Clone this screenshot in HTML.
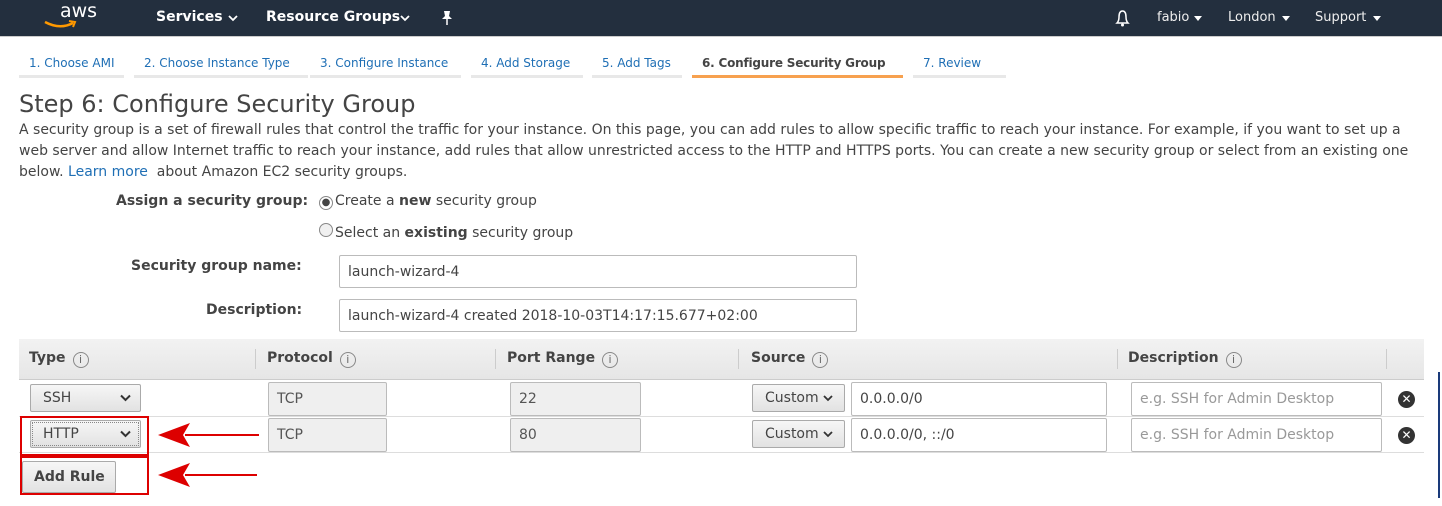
<!DOCTYPE html>
<html><head><meta charset="utf-8"><style>
*{box-sizing:border-box;margin:0;padding:0}
body{width:1442px;height:506px;overflow:hidden;background:#fff;font-family:"DejaVu Sans","Liberation Sans",sans-serif;color:#444;position:relative}
.a{position:absolute;white-space:nowrap}
.nav{position:absolute;left:0;top:0;width:1442px;height:37px;background:#232f3e;border-bottom:1px solid #ccc}
.nav .a{color:#fff;font-size:14px;font-weight:bold;top:9px}
.nav .r{font-weight:normal;font-size:13px;color:#eee;top:10px}
.tab{position:absolute;top:52px;height:26px;border-bottom:3px solid #e8e8e8;font-size:12px;color:#1f6fb5;padding:4px 0 0 10px;white-space:nowrap}
.inp{position:absolute;border:1px solid #bbb;border-radius:2px;background:#fff;font-size:14px;padding:0 8px;display:flex;align-items:center}
.ro{background:#efefef;color:#555}
.btn{position:absolute;border:1px solid #aaa;border-radius:2px;background:linear-gradient(#f6f6f6,#e2e2e2);font-size:14px;color:#444;display:flex;align-items:center;padding-left:12px}
.th{position:absolute;top:350px;font-weight:bold;font-size:14px;color:#444}
.i{display:inline-block;width:16px;height:16px;border:1px solid #888;border-radius:50%;font-size:11px;font-weight:normal;text-align:center;line-height:14px;color:#666;margin-left:7px;vertical-align:-1px}
.sep{position:absolute;top:349px;width:1px;height:20px;background:#ccc}
.x{position:absolute;width:17px;height:17px;border-radius:50%;background:#333;color:#fff;font-size:12px;font-weight:bold;text-align:center;line-height:17px}
.chev{position:absolute;right:9px;top:9px}
</style></head><body>
<div class="nav">
<div class="a" style="left:60px;top:0px;font-size:19px;font-weight:normal">aws</div>
<svg class="a" style="left:43px;top:20px" width="34" height="10"><path d="M2 2 Q17 10 30 3" stroke="#f90" stroke-width="2.5" fill="none"/><path d="M26 1 L32 2 L30 7" stroke="#f90" stroke-width="2" fill="none"/></svg>
<div class="a" style="left:156px">Services</div>
<svg class="a" style="left:228px;top:15px" width="10" height="7"><path d="M1 1 L5 5 L9 1" stroke="#fff" stroke-width="1.8" fill="none"/></svg>
<div class="a" style="left:266px">Resource Groups</div>
<svg class="a" style="left:400px;top:15px" width="10" height="7"><path d="M1 1 L5 5 L9 1" stroke="#fff" stroke-width="1.8" fill="none"/></svg>
<svg class="a" style="left:440px;top:10px" width="14" height="16"><path d="M4 1 L10 1 L9 6 L12 9 L2 9 L5 6 Z" fill="#fff"/><path d="M7 9 L7 15" stroke="#fff" stroke-width="1.5"/></svg>
<svg class="a" style="left:1114px;top:9px" width="17" height="19"><path d="M3 14 Q5 12 5 8 Q5 2 8.5 2 Q12 2 12 8 Q12 12 14 14 Z" stroke="#fff" stroke-width="1.5" fill="none"/><circle cx="8.5" cy="16" r="1.5" fill="#fff"/></svg>
<div class="a r" style="left:1157px">fabio</div>
<svg class="a" style="left:1194px;top:16px" width="8" height="5"><path d="M0 0 H8 L4 5Z" fill="#fff"/></svg>
<div class="a r" style="left:1228px">London</div>
<svg class="a" style="left:1282px;top:16px" width="8" height="5"><path d="M0 0 H8 L4 5Z" fill="#fff"/></svg>
<div class="a r" style="left:1315px">Support</div>
<svg class="a" style="left:1373px;top:16px" width="8" height="5"><path d="M0 0 H8 L4 5Z" fill="#fff"/></svg>
</div>
<div class="tab" style="left:19px;width:105px">1. Choose AMI</div>
<div class="tab" style="left:134px;width:174px">2. Choose Instance Type</div>
<div class="tab" style="left:310px;width:151px">3. Configure Instance</div>
<div class="tab" style="left:471px;width:112px">4. Add Storage</div>
<div class="tab" style="left:592px;width:90px">5. Add Tags</div>
<div class="tab" style="left:692px;width:211px;border-bottom-color:#f7a14f;color:#444;font-weight:bold;letter-spacing:-0.2px">6. Configure Security Group</div>
<div class="tab" style="left:913px;width:93px">7. Review</div>
<div class="a" style="left:19px;top:90px;font-size:24px;color:#444">Step 6: Configure Security Group</div>
<div class="a" style="left:19px;top:120px;font-size:14px;line-height:21px;white-space:normal;width:1415px">A security group is a set of firewall rules that control the traffic for your instance. On this page, you can add rules to allow specific traffic to reach your instance. For example, if you want to set up a web server and allow Internet traffic to reach your instance, add rules that allow unrestricted access to the HTTP and HTTPS ports. You can create a new security group or select from an existing one below. <span style="color:#1f6fb5">Learn more</span>&nbsp; about Amazon EC2 security groups.</div>
<div class="a" style="left:116px;top:193px;font-size:14px;font-weight:bold">Assign a security group:</div>
<div class="a" style="left:319px;top:193px;font-size:14px"><span style="display:inline-block;width:14px;height:14px;border:1px solid #888;border-radius:50%;vertical-align:0px;text-align:center;line-height:11px;font-size:10px;margin-right:2px">&#9679;</span>Create a <b>new</b> security group</div>
<div class="a" style="left:319px;top:223px;font-size:14px"><span style="display:inline-block;width:14px;height:14px;border:1px solid #888;border-radius:50%;vertical-align:0px;background:#f0f0f0;margin-right:2px"></span>Select an <b>existing</b> security group</div>
<div class="a" style="left:131px;top:258px;font-size:14px;font-weight:bold">Security group name:</div>
<div class="inp" style="left:339px;top:255px;width:518px;height:33px">launch-wizard-4</div>
<div class="a" style="left:206px;top:302px;font-size:14px;font-weight:bold">Description:</div>
<div class="inp" style="left:339px;top:299px;width:518px;height:33px">launch-wizard-4 created 2018-10-03T14:17:15.677+02:00</div>
<div class="a" style="left:19px;top:339px;width:1405px;height:41px;background:linear-gradient(#f2f2f2,#e6e6e6);border-bottom:1px solid #ccc"></div>
<div class="th" style="left:29px">Type<span class="i">i</span></div>
<div class="sep" style="left:255px"></div>
<div class="th" style="left:267px">Protocol<span class="i">i</span></div>
<div class="sep" style="left:495px"></div>
<div class="th" style="left:507px">Port Range<span class="i">i</span></div>
<div class="sep" style="left:738px"></div>
<div class="th" style="left:751px">Source<span class="i">i</span></div>
<div class="sep" style="left:1117px"></div>
<div class="th" style="left:1128px">Description<span class="i">i</span></div>
<div class="sep" style="left:1386px"></div>
<div class="a" style="left:19px;top:416px;width:1405px;height:1px;background:#ddd"></div>
<div class="a" style="left:19px;top:452px;width:1405px;height:1px;background:#ddd"></div>
<div class="btn" style="left:30px;top:384px;width:111px;height:28px">SSH<svg class="chev" width="11" height="8"><path d="M1 1.5 L5.5 6 L10 1.5" stroke="#333" stroke-width="2" fill="none"/></svg></div>
<div class="btn" style="left:30px;top:420px;width:111px;height:28px;outline:1px dotted #888;outline-offset:-3px">HTTP<svg class="chev" width="11" height="8"><path d="M1 1.5 L5.5 6 L10 1.5" stroke="#333" stroke-width="2" fill="none"/></svg></div>
<div class="inp ro" style="left:268px;top:382px;width:119px;height:34px">TCP</div>
<div class="inp ro" style="left:268px;top:418px;width:119px;height:34px">TCP</div>
<div class="inp ro" style="left:510px;top:382px;width:131px;height:34px">22</div>
<div class="inp ro" style="left:510px;top:418px;width:131px;height:34px">80</div>
<div class="btn" style="left:752px;top:384px;width:93px;height:28px">Custom<svg style="margin-left:4px" width="10" height="7"><path d="M1 1 L5 5 L9 1" stroke="#333" stroke-width="1.8" fill="none"/></svg></div>
<div class="btn" style="left:752px;top:420px;width:93px;height:28px">Custom<svg style="margin-left:4px" width="10" height="7"><path d="M1 1 L5 5 L9 1" stroke="#333" stroke-width="1.8" fill="none"/></svg></div>
<div class="inp" style="left:851px;top:382px;width:256px;height:34px">0.0.0.0/0</div>
<div class="inp" style="left:851px;top:418px;width:256px;height:34px">0.0.0.0/0, ::/0</div>
<div class="inp" style="left:1131px;top:382px;width:251px;height:34px;color:#999">e.g. SSH for Admin Desktop</div>
<div class="inp" style="left:1131px;top:418px;width:251px;height:34px;color:#999">e.g. SSH for Admin Desktop</div>
<div class="x" style="left:1398px;top:391px">&#10005;</div>
<div class="x" style="left:1398px;top:427px">&#10005;</div>
<div class="btn" style="left:22px;top:461px;width:94px;height:32px;font-weight:bold;padding-left:11px">Add Rule</div>
<div class="a" style="left:20px;top:416px;width:129px;height:40px;border:2px solid #d00"></div>
<div class="a" style="left:20px;top:456px;width:129px;height:39px;border:2px solid #d00"></div>
<svg class="a" style="left:155px;top:420px" width="105" height="75"><path d="M104 15 H30" stroke="#d00" stroke-width="2"/><path d="M3 15 L35 3 L28 15 L35 27 Z" fill="#d00"/><path d="M102 55 H30" stroke="#d00" stroke-width="2"/><path d="M3 55 L35 43 L28 55 L35 67 Z" fill="#d00"/></svg>
<div class="a" style="left:1438px;top:372px;width:2px;height:126px;background:#1a3a7a"></div>
</body></html>
